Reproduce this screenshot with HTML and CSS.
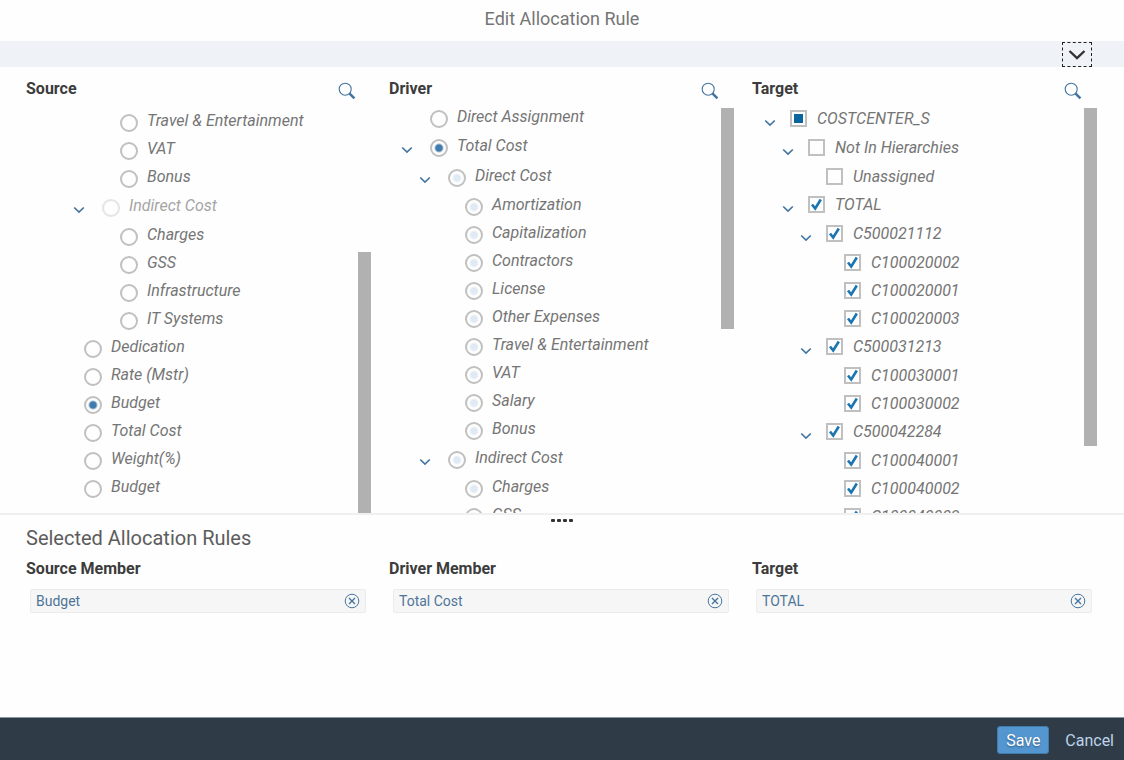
FILE: index.html
```html
<!DOCTYPE html>
<html lang="en">
<head>
<meta charset="utf-8">
<meta name="viewport" content="width=device-width, initial-scale=1">
<title>Edit Allocation Rule</title>
<link rel="stylesheet" href="styles.css">
</head>
<body>
<svg class="sprite" aria-hidden="true">
  <symbol id="chevron" viewBox="0 0 12 8"><path d="M1.2 1.5 6 6 10.800 1.5" fill="none" stroke="currentColor" stroke-width="1.7"/></symbol>
  <symbol id="search" viewBox="0 0 18 18"><circle cx="7.2" cy="7.2" r="6" fill="none" stroke="currentColor" stroke-width="1.1"/><path d="M11.4 11.4 16.4 16.4" stroke="currentColor" stroke-width="2.6"/></symbol>
  <symbol id="remove" viewBox="0 0 16 16"><circle cx="8" cy="8" r="6.8" fill="none" stroke="currentColor" stroke-width="1"/><path d="M5 5 11 11M11 5 5 11" stroke="currentColor" stroke-width="1.4"/></symbol>
</svg>
<header class="title-bar"><h1>Edit Allocation Rule</h1></header>
<div class="strip">
  <button class="expand" type="button" aria-label="Expand header"><svg viewBox="0 0 18 12"><path d="M1.5 2 9 9.2 16.500 2" fill="none" stroke="currentColor" stroke-width="2.4"/></svg></button>
</div>
<main class="main">
  <section class="columns pickers">
    <section class="picker">
      <div class="picker-head"><h2>Source</h2><button class="icon-btn" type="button" aria-label="Search source"><svg><use href="#search"/></svg></button></div>
      <div class="viewport">
        <ul class="tree source">
          <li><ul><li><ul>
            <li><label class="row"><input type="radio" name="source">Travel &amp; Entertainment</label></li>
            <li><label class="row"><input type="radio" name="source">VAT</label></li>
            <li><label class="row"><input type="radio" name="source">Bonus</label></li>
          </ul></li>
          <li>
            <div class="row parent"><button class="toggle" type="button" aria-label="Collapse Indirect Cost"><svg><use href="#chevron"/></svg></button><label class="off"><input type="radio" name="source" disabled>Indirect Cost</label></div>
            <ul>
              <li><label class="row"><input type="radio" name="source">Charges</label></li>
              <li><label class="row"><input type="radio" name="source">GSS</label></li>
              <li><label class="row"><input type="radio" name="source">Infrastructure</label></li>
              <li><label class="row"><input type="radio" name="source">IT Systems</label></li>
            </ul>
          </li></ul></li>
          <li><label class="row"><input type="radio" name="source">Dedication</label></li>
          <li><label class="row"><input type="radio" name="source">Rate (Mstr)</label></li>
          <li><label class="row"><input type="radio" name="source" checked>Budget</label></li>
          <li><label class="row"><input type="radio" name="source">Total Cost</label></li>
          <li><label class="row"><input type="radio" name="source">Weight(%)</label></li>
          <li><label class="row"><input type="radio" name="source">Budget</label></li>
        </ul>
        <div class="track at-end"><div class="thumb" style="height:64.5%"></div></div>
      </div>
    </section>
    <section class="picker">
      <div class="picker-head"><h2>Driver</h2><button class="icon-btn" type="button" aria-label="Search driver"><svg><use href="#search"/></svg></button></div>
      <div class="viewport">
        <ul class="tree driver">
          <li><label class="row"><input type="radio" name="driver">Direct Assignment</label></li>
          <li>
            <div class="row parent"><button class="toggle" type="button" aria-label="Collapse Total Cost"><svg><use href="#chevron"/></svg></button><label><input type="radio" name="driver" checked>Total Cost</label></div>
            <ul class="included">
              <li>
                <div class="row parent"><button class="toggle" type="button" aria-label="Collapse Direct Cost"><svg><use href="#chevron"/></svg></button><label><input type="radio" name="driver">Direct Cost</label></div>
                <ul>
                  <li><label class="row"><input type="radio" name="driver">Amortization</label></li>
                  <li><label class="row"><input type="radio" name="driver">Capitalization</label></li>
                  <li><label class="row"><input type="radio" name="driver">Contractors</label></li>
                  <li><label class="row"><input type="radio" name="driver">License</label></li>
                  <li><label class="row"><input type="radio" name="driver">Other Expenses</label></li>
                  <li><label class="row"><input type="radio" name="driver">Travel &amp; Entertainment</label></li>
                  <li><label class="row"><input type="radio" name="driver">VAT</label></li>
                  <li><label class="row"><input type="radio" name="driver">Salary</label></li>
                  <li><label class="row"><input type="radio" name="driver">Bonus</label></li>
                </ul>
              </li>
              <li>
                <div class="row parent"><button class="toggle" type="button" aria-label="Collapse Indirect Cost"><svg><use href="#chevron"/></svg></button><label><input type="radio" name="driver">Indirect Cost</label></div>
                <ul>
                  <li><label class="row"><input type="radio" name="driver">Charges</label></li>
                  <li><label class="row"><input type="radio" name="driver">GSS</label></li>
                </ul>
              </li>
            </ul>
          </li>
        </ul>
        <div class="track"><div class="thumb" style="height:54.5%"></div></div>
      </div>
    </section>
    <section class="picker">
      <div class="picker-head"><h2>Target</h2><button class="icon-btn" type="button" aria-label="Search target"><svg><use href="#search"/></svg></button></div>
      <div class="viewport">
        <ul class="tree target">
          <li>
            <div class="row parent"><button class="toggle" type="button" aria-label="Collapse COSTCENTER_S"><svg><use href="#chevron"/></svg></button><label><input class="partial" type="checkbox">COSTCENTER_S</label></div>
            <ul>
              <li>
                <div class="row parent"><button class="toggle" type="button" aria-label="Collapse Not In Hierarchies"><svg><use href="#chevron"/></svg></button><label><input type="checkbox">Not In Hierarchies</label></div>
                <ul><li><label class="row"><input type="checkbox">Unassigned</label></li></ul>
              </li>
              <li>
                <div class="row parent"><button class="toggle" type="button" aria-label="Collapse TOTAL"><svg><use href="#chevron"/></svg></button><label><input type="checkbox" checked>TOTAL</label></div>
                <ul>
                  <li>
                    <div class="row parent"><button class="toggle" type="button" aria-label="Collapse C500021112"><svg><use href="#chevron"/></svg></button><label><input type="checkbox" checked>C500021112</label></div>
                    <ul>
                      <li><label class="row"><input type="checkbox" checked>C100020002</label></li>
                      <li><label class="row"><input type="checkbox" checked>C100020001</label></li>
                      <li><label class="row"><input type="checkbox" checked>C100020003</label></li>
                    </ul>
                  </li>
                  <li>
                    <div class="row parent"><button class="toggle" type="button" aria-label="Collapse C500031213"><svg><use href="#chevron"/></svg></button><label><input type="checkbox" checked>C500031213</label></div>
                    <ul>
                      <li><label class="row"><input type="checkbox" checked>C100030001</label></li>
                      <li><label class="row"><input type="checkbox" checked>C100030002</label></li>
                    </ul>
                  </li>
                  <li>
                    <div class="row parent"><button class="toggle" type="button" aria-label="Collapse C500042284"><svg><use href="#chevron"/></svg></button><label><input type="checkbox" checked>C500042284</label></div>
                    <ul>
                      <li><label class="row"><input type="checkbox" checked>C100040001</label></li>
                      <li><label class="row"><input type="checkbox" checked>C100040002</label></li>
                      <li><label class="row"><input type="checkbox" checked>C100040003</label></li>
                    </ul>
                  </li>
                </ul>
              </li>
            </ul>
          </li>
        </ul>
        <div class="track"><div class="thumb" style="height:83.5%"></div></div>
      </div>
    </section>
  </section>
  <section class="selected">
    <div class="grip"><i></i><i></i><i></i><i></i></div>
    <h2 class="selected-title">Selected Allocation Rules</h2>
    <div class="columns">
      <div><h3>Source Member</h3><div class="token"><a href="#">Budget</a><button class="icon-btn" type="button" aria-label="Remove Budget"><svg><use href="#remove"/></svg></button></div></div>
      <div><h3>Driver Member</h3><div class="token"><a href="#">Total Cost</a><button class="icon-btn" type="button" aria-label="Remove Total Cost"><svg><use href="#remove"/></svg></button></div></div>
      <div><h3>Target</h3><div class="token"><a href="#">TOTAL</a><button class="icon-btn" type="button" aria-label="Remove TOTAL"><svg><use href="#remove"/></svg></button></div></div>
    </div>
  </section>
</main>
<footer class="footer">
  <button class="save" type="button">Save</button>
  <button class="cancel" type="button">Cancel</button>
</footer>
</body>
</html>
```
FILE: styles.css
```css
* { box-sizing: border-box; }
body {
  margin: 0;
  height: 100vh;
  display: flex;
  flex-direction: column;
  background: #fefefe;
  color: #333;
  font-family: Roboto, "Open Sans", sans-serif;
  font-size: 16px;
}
h1, h2, h3, ul { margin: 0; padding: 0; }
button { margin: 0; padding: 0; border: 0; background: none; font: inherit; cursor: pointer; }
svg { display: block; }
.sprite { display: none; }

.title-bar { text-align: center; padding: 7px 0 10px; }
.title-bar h1 { font-size: 18px; line-height: 24px; font-weight: 400; color: #757575; }
.strip { display: flex; justify-content: flex-end; padding: 1px 32px 0 0; height: 26px; background: #eff3f8; }
.expand { display: grid; place-items: center; width: 30px; height: 25px; border: 1px dashed #222; color: #333; }
.expand svg { width: 18px; height: 12px; }

.main { flex: 1; min-height: 0; display: flex; flex-direction: column; }
.columns { display: grid; grid-template-columns: repeat(3, minmax(0, 1fr)); gap: 18px; padding: 0 27px 0 26px; }
.pickers { flex: 447 1 0; min-height: 0; grid-template-rows: minmax(0, 1fr); }
.picker { display: flex; flex-direction: column; min-height: 0; }
.picker-head { display: flex; justify-content: space-between; align-items: center; padding: 6px 15px 0 0; height: 41px; }
.picker-head h2, h3 { font-size: 16px; line-height: 20px; font-weight: 700; color: #3c3c3c; }
.picker-head h2 { padding-bottom: 4px; }
.icon-btn { color: #4475a0; }
.picker-head svg { width: 18px; height: 18px; }

.viewport { flex: 1; min-height: 0; display: flex; justify-content: space-between; overflow: hidden; }
.tree, .tree ul { list-style: none; }
.tree ul { padding-left: 18px; }
.source { margin: -2px 0 0 29px; }
.driver { margin: -6px 0 0 12px; }
.target { margin: -4px 0 0 12px; }
.row, .row label { display: flex; align-items: center; }
.row { height: 28px; padding-left: 29px; color: #757575; font-style: italic; white-space: nowrap; }
.parent { height: 30px; padding-left: 0; }
.driver ul ul { padding-left: 17px; }
.target .row { padding-left: 26px; }
.target .parent { height: 29px; padding-left: 0; }
.toggle { width: 12px; margin: 9px 17px 0 0; color: #4475a0; }
.target .toggle { margin: 8px 14px 0 0; }
.toggle svg { width: 12px; height: 8px; }
.off { opacity: .65; }
.off input { opacity: .6; }

input { appearance: none; flex: none; margin: 0; background: #fefefe; border: 2px solid #c0c0c0; }
input[type="radio"] { width: 18px; height: 18px; margin: 5px 9px 0 0; border-radius: 50%; }
input[type="radio"]:checked { background: radial-gradient(circle, #427cac 3px, #fefefe 5px); }
.included input[type="radio"] { background: radial-gradient(circle, #dfeaf4 3px, #fefefe 5px); }
input[type="checkbox"] { width: 17px; height: 17px; margin: 0 10px 0 0; }
input[type="checkbox"]:checked {
  background: #fefefe url("data:image/svg+xml,%3Csvg xmlns='http://www.w3.org/2000/svg' viewBox='0 0 13 13'%3E%3Cpath d='M2 6.500 5.200 10.500 10.800 1.500' fill='none' stroke='%231a75b0' stroke-width='2.600'/%3E%3C/svg%3E") center / 13px 13px no-repeat;
}
input.partial { background: linear-gradient(#0a659f, #0a659f) center / 9px 9px no-repeat; }

.track { flex: none; width: 13px; display: flex; flex-direction: column; }
.at-end { justify-content: flex-end; }
.thumb { background: #b1b1b1; }

.selected { flex: 203 1 0; min-height: 0; border-top: 2px solid #f0f0f0; }
.grip { display: flex; justify-content: center; gap: 2px; padding-top: 4px; height: 11px; }
.grip i { width: 4px; height: 3px; background: #333; border-radius: 1px; }
.selected-title { padding-left: 26px; font-size: 20px; line-height: 24px; font-weight: 400; color: #5c5c5c; }
h3 { padding-top: 9px; }
.token { display: flex; align-items: center; justify-content: space-between; margin: 10px 5px 0 4px; height: 24px; padding: 0 5px; background: #f6f6f6; border: 1px solid #ececec; border-radius: 2px; font-size: 14px; }
.token a { color: #4e7599; text-decoration: none; }
.token svg { width: 16px; height: 16px; }

.footer { display: flex; justify-content: flex-end; align-items: center; gap: 16px; height: 43px; padding: 2px 10px 0 0; background: #2f3c48; border-top: 1px solid #8796a3; }
.save { width: 52px; height: 28px; border: 1px solid #427cac; border-radius: 3px; background: #5496cf; color: #fff; text-shadow: 0 1px 2px #2f5c86; }
.cancel { color: #bcd3e8; }
```
